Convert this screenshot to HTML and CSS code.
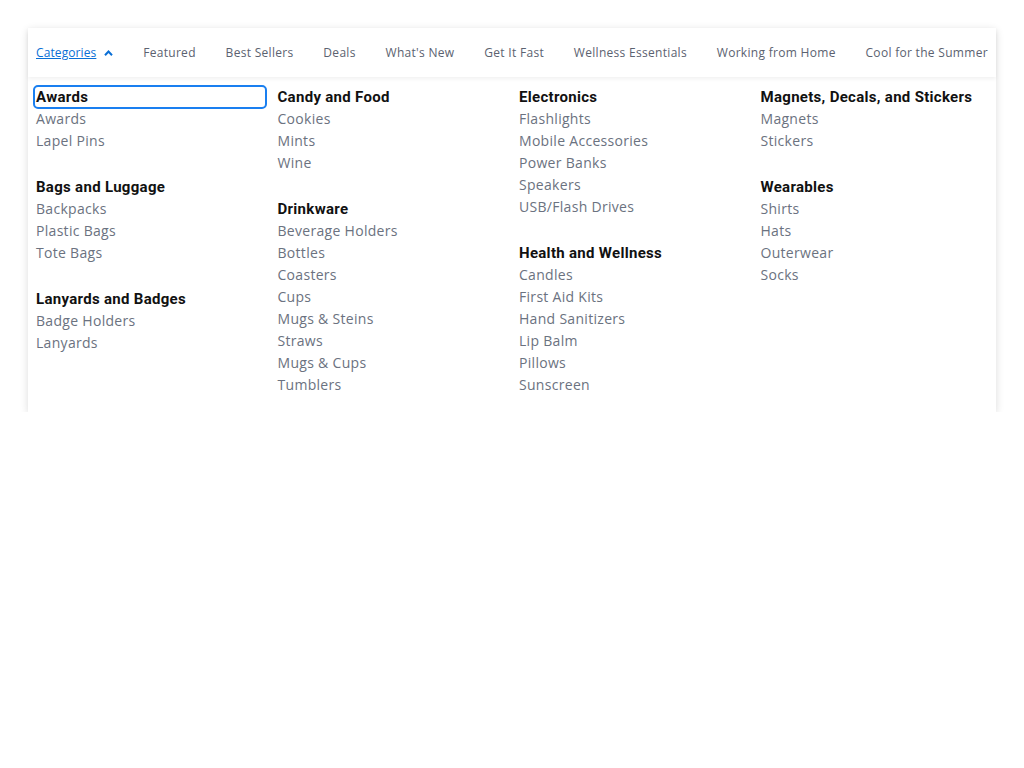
FILE: index.html
```html
<!DOCTYPE html>
<html lang="en">
<head>
<meta charset="utf-8">
<title>Categories menu</title>
<link rel="stylesheet" href="styles.css">
</head>
<body>
<div class="menu">
  <nav class="nav">
    <span class="nav-cat">
      <a class="nav-item active" href="#">Categories</a>
      <svg class="chev" width="9" height="6" viewBox="0 0 9 6"><path d="M1 5.2 L4.5 1.5 L8 5.2" fill="none" stroke="#0a6fd6" stroke-width="2"/></svg>
    </span>
    <a class="nav-item" href="#">Featured</a>
    <a class="nav-item" href="#">Best Sellers</a>
    <a class="nav-item" href="#">Deals</a>
    <a class="nav-item" href="#">What's New</a>
    <a class="nav-item" href="#">Get It Fast</a>
    <a class="nav-item" href="#">Wellness Essentials</a>
    <a class="nav-item" href="#">Working from Home</a>
    <a class="nav-item" href="#">Cool for the Summer</a>
  </nav>
  <div class="panel">
    <div class="col">
      <div class="group">
        <a class="head focus" href="#">Awards</a>
        <a class="item" href="#">Awards</a>
        <a class="item" href="#">Lapel Pins</a>
      </div>
      <div class="group">
        <a class="head" href="#">Bags and Luggage</a>
        <a class="item" href="#">Backpacks</a>
        <a class="item" href="#">Plastic Bags</a>
        <a class="item" href="#">Tote Bags</a>
      </div>
      <div class="group">
        <a class="head" href="#">Lanyards and Badges</a>
        <a class="item" href="#">Badge Holders</a>
        <a class="item" href="#">Lanyards</a>
      </div>
    </div>
    <div class="col">
      <div class="group">
        <a class="head" href="#">Candy and Food</a>
        <a class="item" href="#">Cookies</a>
        <a class="item" href="#">Mints</a>
        <a class="item" href="#">Wine</a>
      </div>
      <div class="group">
        <a class="head" href="#">Drinkware</a>
        <a class="item" href="#">Beverage Holders</a>
        <a class="item" href="#">Bottles</a>
        <a class="item" href="#">Coasters</a>
        <a class="item" href="#">Cups</a>
        <a class="item" href="#">Mugs &amp; Steins</a>
        <a class="item" href="#">Straws</a>
        <a class="item" href="#">Mugs &amp; Cups</a>
        <a class="item" href="#">Tumblers</a>
      </div>
    </div>
    <div class="col">
      <div class="group">
        <a class="head" href="#">Electronics</a>
        <a class="item" href="#">Flashlights</a>
        <a class="item" href="#">Mobile Accessories</a>
        <a class="item" href="#">Power Banks</a>
        <a class="item" href="#">Speakers</a>
        <a class="item" href="#">USB/Flash Drives</a>
      </div>
      <div class="group">
        <a class="head" href="#">Health and Wellness</a>
        <a class="item" href="#">Candles</a>
        <a class="item" href="#">First Aid Kits</a>
        <a class="item" href="#">Hand Sanitizers</a>
        <a class="item" href="#">Lip Balm</a>
        <a class="item" href="#">Pillows</a>
        <a class="item" href="#">Sunscreen</a>
      </div>
    </div>
    <div class="col">
      <div class="group">
        <a class="head" href="#">Magnets, Decals, and Stickers</a>
        <a class="item" href="#">Magnets</a>
        <a class="item" href="#">Stickers</a>
      </div>
      <div class="group">
        <a class="head" href="#">Wearables</a>
        <a class="item" href="#">Shirts</a>
        <a class="item" href="#">Hats</a>
        <a class="item" href="#">Outerwear</a>
        <a class="item" href="#">Socks</a>
      </div>
    </div>
  </div>
</div>
</body>
</html>
```
FILE: styles.css
```css
* { box-sizing: border-box; }
html, body { margin: 0; padding: 0; background: #fff; }
body { padding: 28px 28px 0 28px; font-family: "Open Sans", "Liberation Sans", sans-serif; }
a { text-decoration: none; }

.menu {
  width: 968px;
  background: #fff;
  box-shadow: 0 2px 8px rgba(0, 0, 0, 0.14);
}

.nav {
  display: flex;
  align-items: center;
  justify-content: space-between;
  height: 49px;
  padding: 1px 8px 0 8px;
  box-shadow: 0 2px 4px rgba(0, 0, 0, 0.06);
}
.nav-cat { display: flex; align-items: center; gap: 8px; }
.nav-item {
  font-size: 12px;
  color: #5b6270;
  letter-spacing: 0.3px;
  white-space: nowrap;
  line-height: 16px;
}
.nav-item.active {
  color: #0a6fd6;
  text-decoration: underline;
  letter-spacing: 0.1px;
}
.chev { display: block; }

.panel {
  display: grid;
  grid-template-columns: repeat(4, 241.5px);
  padding: 9px 8px 16px 8px;
}
.col { display: flex; flex-direction: column; gap: 24px; }
.group { display: flex; flex-direction: column; }
.head {
  font-family: Roboto, "Liberation Sans", sans-serif;
  font-weight: 700;
  font-size: 15px;
  line-height: 22px;
  letter-spacing: 0.3px;
  color: #111;
}
.head.focus {
  margin: 0 11.5px 0 -2px;
  padding-left: 2px;
  border-radius: 4px;
  outline: 2px solid #1a7ff0;
  outline-offset: -1px;
}
.item {
  font-size: 14px;
  line-height: 22px;
  color: #6b7280;
  letter-spacing: 0.3px;
}
```
